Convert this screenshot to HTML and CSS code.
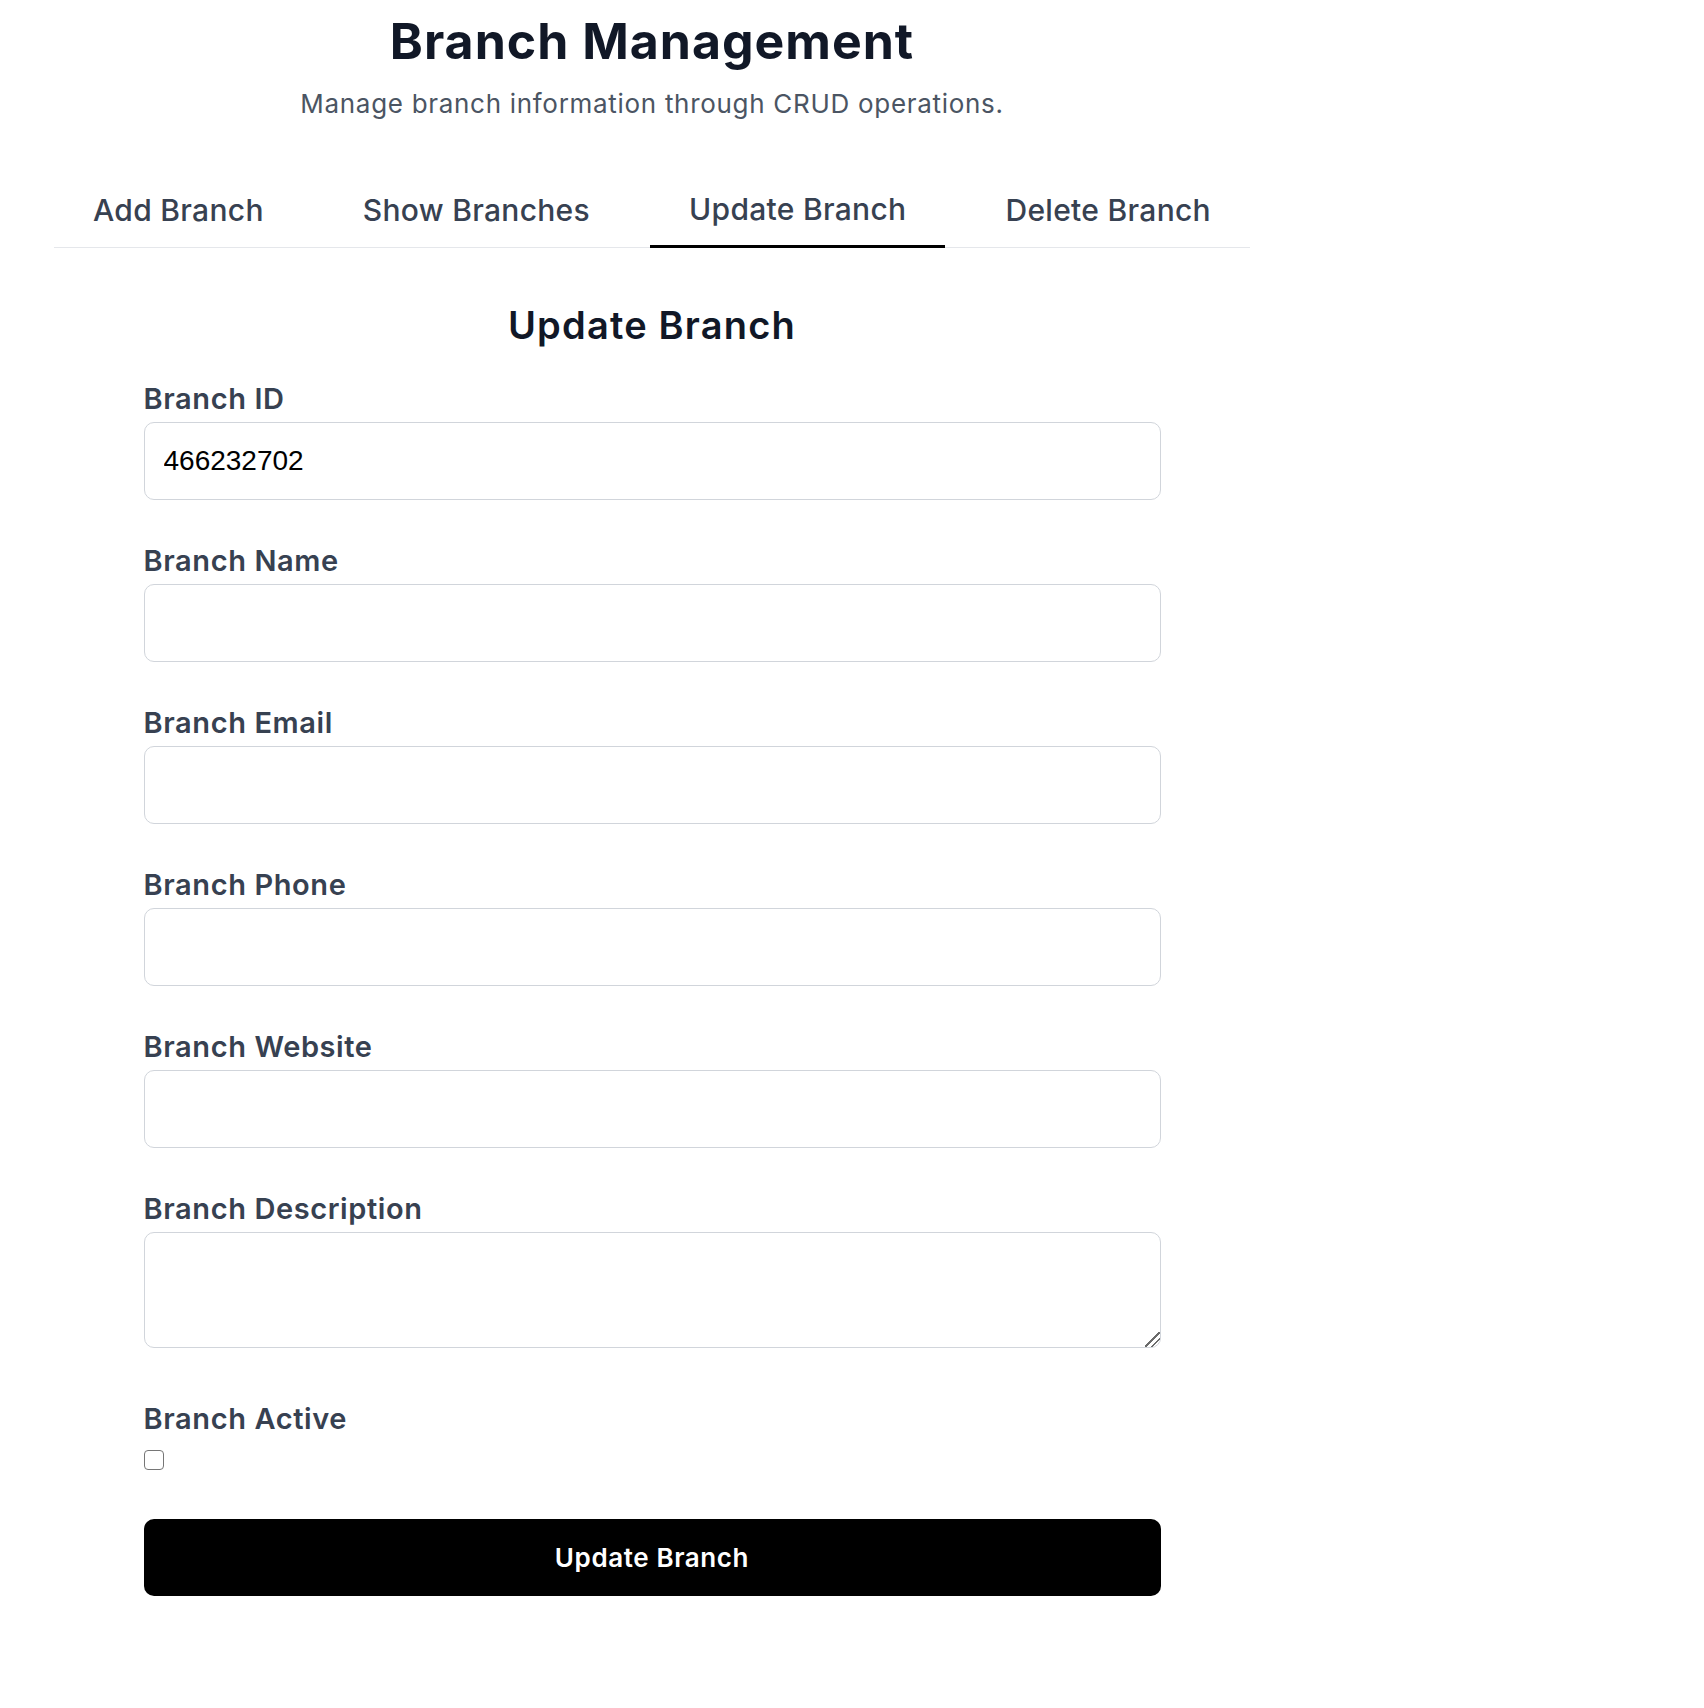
FILE: index.html
```html
<!DOCTYPE html>
<html lang="en">
<head>
<meta charset="utf-8">
<title>Branch Management</title>
<link rel="stylesheet" href="styles.css">
</head>
<body>
<div class="page">
  <h1 class="title">Branch Management</h1>
  <p class="subtitle">Manage branch information through CRUD operations.</p>

  <nav class="tabs">
    <div class="tab">Add Branch</div>
    <div class="tab">Show Branches</div>
    <div class="tab tab-active">Update Branch</div>
    <div class="tab">Delete Branch</div>
  </nav>

  <section class="panel">
    <h2 class="panel-title">Update Branch</h2>
    <form class="form">
      <div class="field">
        <label class="label" for="bid">Branch ID</label>
        <input class="input" id="bid" type="text" value="466232702">
      </div>
      <div class="field">
        <label class="label" for="bname">Branch Name</label>
        <input class="input" id="bname" type="text">
      </div>
      <div class="field">
        <label class="label" for="bemail">Branch Email</label>
        <input class="input" id="bemail" type="email">
      </div>
      <div class="field">
        <label class="label" for="bphone">Branch Phone</label>
        <input class="input" id="bphone" type="text">
      </div>
      <div class="field">
        <label class="label" for="bweb">Branch Website</label>
        <input class="input" id="bweb" type="text">
      </div>
      <div class="field field-desc">
        <label class="label" for="bdesc">Branch Description</label>
        <textarea class="textarea" id="bdesc"></textarea>
      </div>
      <div class="field-check">
        <label class="label" for="bactive">Branch Active</label>
        <input class="checkbox" id="bactive" type="checkbox">
      </div>
      <button class="submit" type="button">Update Branch</button>
    </form>
  </section>
</div>
</body>
</html>
```

FILE: styles.css
```css
* { box-sizing: border-box; }

body {
  margin: 0;
  background: #ffffff;
  font-family: "Inter", "Open Sans", sans-serif;
  color: #111827;
}

.page {
  width: 1196px;
  margin-left: 54px;
}

.title {
  margin: 0;
  padding-top: 12px;
  font-size: 50px;
  line-height: 58px;
  font-weight: 700;
  letter-spacing: 1px;
  text-align: center;
  color: #111827;
}

.subtitle {
  margin: 16px 0 0;
  font-size: 26px;
  line-height: 36px;
  font-weight: 400;
  letter-spacing: 0.7px;
  text-align: center;
  color: #4b5563;
}

.tabs {
  display: flex;
  justify-content: space-between;
  margin-top: 46px;
  border-bottom: 1px solid #e5e7eb;
}

.tab {
  padding: 22px 39px 15px;
  margin-bottom: -1px;
  font-size: 30px;
  line-height: 40px;
  font-weight: 500;
  letter-spacing: 0.3px;
  color: #374151;
  border-bottom: 3px solid transparent;
}

.tab-active {
  padding-top: 21px;
  padding-bottom: 16px;
  border-bottom-color: #000000;
}

.panel {
  width: 1017px;
  margin: 0 auto;
  padding-top: 55px;
}

.panel-title {
  margin: 0 0 32px;
  font-size: 38px;
  line-height: 44px;
  font-weight: 600;
  letter-spacing: 1.2px;
  text-align: center;
  color: #111827;
}

.form {
  display: flex;
  flex-direction: column;
}

.field {
  display: flex;
  flex-direction: column;
  margin-bottom: 41px;
}

.field-desc {
  margin-bottom: 51px;
}

.label {
  display: block;
  margin-bottom: 3px;
  font-size: 29px;
  line-height: 40px;
  font-weight: 600;
  letter-spacing: 0.6px;
  color: #374151;
}

.input,
.textarea {
  display: block;
  width: 100%;
  border: 1px solid #d1d5db;
  border-radius: 10px;
  background: #ffffff;
  padding: 0 19px;
  font-family: "Liberation Sans", Arial, sans-serif;
  font-size: 28px;
  color: #000000;
  outline: none;
}

.input {
  height: 78px;
}

.textarea {
  height: 116px;
  resize: vertical;
  padding-top: 12px;
}

.textarea::-webkit-resizer {
  background: linear-gradient(135deg,
    transparent 0 46%, #6b6b6b 46% 54%,
    transparent 54% 68%, #6b6b6b 68% 76%,
    transparent 76% 100%);
}

.field-check {
  display: flex;
  flex-direction: column;
  align-items: flex-start;
}

.checkbox {
  appearance: none;
  -webkit-appearance: none;
  display: block;
  width: 20px;
  height: 20px;
  margin: 8px 0 0;
  border: 1.5px solid #767676;
  border-radius: 4px;
  background: #ffffff;
}

.submit {
  margin-top: 49px;
  height: 77px;
  width: 100%;
  border: none;
  border-radius: 10px;
  background: #000000;
  color: #ffffff;
  font-family: "Inter", "Open Sans", sans-serif;
  font-size: 26px;
  font-weight: 600;
  letter-spacing: 0.6px;
  cursor: pointer;
}
```
